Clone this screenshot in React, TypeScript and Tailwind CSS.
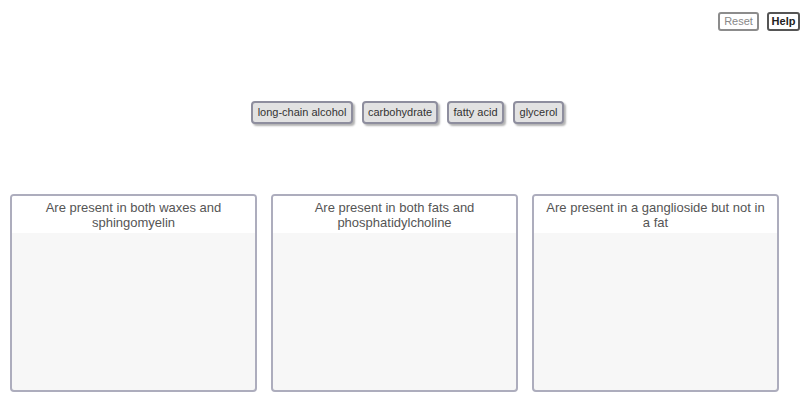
import React from 'react';

const chips = [
  { label: 'long-chain alcohol', w: 'w-[102px]' },
  { label: 'carbohydrate', w: 'w-[76px]' },
  { label: 'fatty acid', w: 'w-[57px]' },
  { label: 'glycerol', w: 'w-[51px]' },
];

const bins = [
  'Are present in both waxes and sphingomyelin',
  'Are present in both fats and phosphatidylcholine',
  'Are present in a ganglioside but not in a fat',
];

export default function App() {
  return (
    <div className="w-[801px] h-[402px] bg-white overflow-hidden font-['Liberation_Sans',Arial,sans-serif]">
      {/* Toolbar */}
      <div className="flex justify-end gap-[8px] pt-[12px] pr-[1px]">
        <button className="h-[19px] w-[41px] rounded-[3px] border-2 border-[#8c8c8c] bg-white text-[11px] leading-none text-[#888]">
          Reset
        </button>
        <button className="h-[19px] w-[33px] rounded-[3px] border-2 border-[#555] bg-white text-[11px] font-bold leading-none text-[#222]">
          Help
        </button>
      </div>

      {/* Draggable items */}
      <div className="flex mt-[70px] ml-[251px] gap-[9px]">
        {chips.map((c) => (
          <div
            key={c.label}
            className={`${c.w} h-[23px] flex items-center justify-center rounded-[4px] border-2 border-[#8e8e9e] bg-[#e2e2e2] text-[11px] text-[#333] shadow-[2px_2px_2px_rgba(0,0,0,0.3)]`}
          >
            {c.label}
          </div>
        ))}
      </div>

      {/* Drop targets */}
      <div className="flex mt-[70px] ml-[10px] gap-[14px]">
        {bins.map((b) => (
          <div
            key={b}
            className="w-[247px] h-[198px] flex flex-col rounded-[4px] border-2 border-[#adadbd] bg-[#f7f7f7] overflow-hidden"
          >
            <div className="h-[37px] bg-white px-[9px] pt-[4px] text-center text-[13px] leading-[15px] text-[#555]">
              {b}
            </div>
          </div>
        ))}
      </div>
    </div>
  );
}
